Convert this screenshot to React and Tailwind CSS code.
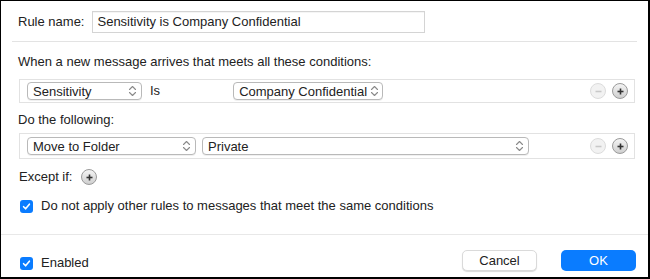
import React from "react";

const font = { fontFamily: '"Liberation Sans", Arial, sans-serif' };

const Arrows = () => (
  <svg width="9" height="12" viewBox="0 0 9 12" className="shrink-0">
    <path d="M1.5 4.5 L4.5 1.5 L7.5 4.5" fill="none" stroke="#8a8a8a" strokeWidth="1.1" strokeLinecap="round" strokeLinejoin="round" />
    <path d="M1.5 7.5 L4.5 10.5 L7.5 7.5" fill="none" stroke="#8a8a8a" strokeWidth="1.1" strokeLinecap="round" strokeLinejoin="round" />
  </svg>
);

const Select = ({ label, className }) => (
  <div className={`flex h-[18px] items-center justify-between gap-[3px] whitespace-nowrap rounded-[4px] border border-[#b9b9b9] bg-white pl-[5px] pr-[4px] text-[13px] text-[#222] shadow-[0_1px_0_rgba(0,0,0,0.06)] ${className}`}>
    <span className="leading-none">{label}</span>
    <Arrows />
  </div>
);

const RoundBtn = ({ minus }) => (
  <div
    className={`flex h-[16px] w-[16px] items-center justify-center rounded-full border ${
      minus ? "border-[#dcdcdc] bg-[#f2f2f2]" : "border-[#9a9a9a] bg-gradient-to-b from-[#f4f4f4] to-[#cfcfcf]"
    }`}
  >
    <svg width="9" height="9" viewBox="0 0 9 9">
      <path d="M1.5 4.5 H7.5" stroke={minus ? "#c8c8c8" : "#333"} strokeWidth="1.6" />
      {!minus && <path d="M4.5 1.5 V7.5" stroke="#333" strokeWidth="1.6" />}
    </svg>
  </div>
);

const Check = () => (
  <div className="flex h-[13px] w-[13px] shrink-0 items-center justify-center rounded-[3px] bg-[#0a7cff]">
    <svg width="9" height="9" viewBox="0 0 9 9">
      <path d="M1.6 4.7 L3.6 6.8 L7.4 2.2" fill="none" stroke="white" strokeWidth="1.6" strokeLinecap="round" strokeLinejoin="round" />
    </svg>
  </div>
);

export default function App() {
  return (
    <div style={font} className="h-[279px] w-[650px] overflow-hidden border-l border-t border-r-2 border-b-2 border-black bg-white text-[13px] leading-[20px] text-[#222]">
      <div className="flex h-[22px] items-center pl-[17px] mt-[10px]">
        <span>Rule name:</span>
        <div className="ml-[8px] flex h-[22px] w-[333px] items-center border border-[#d4d4d4] bg-white px-[4px] shadow-[inset_0_1px_0_rgba(0,0,0,0.04)]">
          Sensitivity is Company Confidential
        </div>
      </div>

      <div className="mx-[11px] mt-[8px] h-px bg-[#e3e3e3]" />

      <div className="h-[20px] pl-[17px] mt-[10px]">When a new message arrives that meets all these conditions:</div>

      <div className="ml-[18px] mr-[13px] mt-[7px] flex h-[24px] items-center border border-[#e2e2e2] bg-white pl-[7px] pr-[6px]">
        <Select label="Sensitivity" className="w-[115px]" />
        <span className="ml-[8px]">Is</span>
        <Select label="Company Confidential" className="ml-[73px] w-[150px]" />
        <div className="ml-auto flex items-center gap-[6px]">
          <RoundBtn minus />
          <RoundBtn />
        </div>
      </div>

      <div className="h-[20px] pl-[17px] mt-[7px]">Do the following:</div>

      <div className="ml-[18px] mr-[13px] mt-[3px] flex h-[26px] items-center border border-[#e2e2e2] bg-white pl-[7px] pr-[6px]">
        <Select label="Move to Folder" className="w-[169px]" />
        <Select label="Private" className="ml-[6px] w-[327px]" />
        <div className="ml-auto flex items-center gap-[6px]">
          <RoundBtn minus />
          <RoundBtn />
        </div>
      </div>

      <div className="flex h-[20px] items-center pl-[18px] mt-[8px]">
        <span>Except if:</span>
        <div className="ml-[9px]">
          <RoundBtn />
        </div>
      </div>

      <div className="flex h-[20px] items-center pl-[19px] mt-[9px]">
        <Check />
        <span className="ml-[8px]">Do not apply other rules to messages that meet the same conditions</span>
      </div>

      <div className="mt-[18px] h-px bg-[#e8e8e8]" />

      <div className="flex h-[21px] items-center pl-[19px] pr-[12px] mt-[15px]">
        <div className="mt-[5px] flex items-center">
          <Check />
          <span className="ml-[8px]">Enabled</span>
        </div>
        <div className="ml-auto flex items-center gap-[24px]">
          <div className="flex h-[21px] w-[75px] items-center justify-center rounded-[5px] border border-[#dadada] bg-white shadow-[0_1px_1px_rgba(0,0,0,0.15)]">
            Cancel
          </div>
          <div className="flex h-[21px] w-[75px] items-center justify-center rounded-[5px] bg-[#0a7cff] text-white">
            OK
          </div>
        </div>
      </div>
    </div>
  );
}
